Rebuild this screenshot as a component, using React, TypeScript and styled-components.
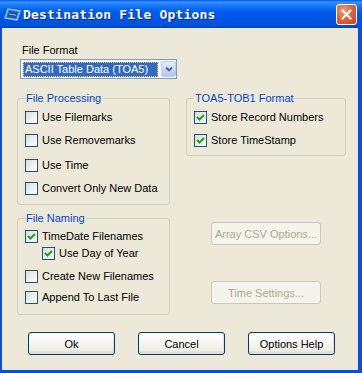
import React from 'react'
import styled, { createGlobalStyle } from 'styled-components'

const GlobalStyle = createGlobalStyle`
    html, body {
        margin: 0;
        padding: 0;
        background: #ECE9D8;
    }
    * {
        box-sizing: border-box;
    }
`;

const CheckMark = () => (
    <svg width="9" height="9" viewBox="0 0 9 9">
        <polyline points="1,4 3.5,6.5 8,2" fill="none" stroke="#21A121" strokeWidth="2.2" />
    </svg>
)

const AppIcon = () => (
    <svg width="17" height="13" viewBox="0 0 17 13">
        <polygon points="4,1 16,3 13,12 1,10" fill="#2F6FD0" stroke="#A9D8FF" strokeWidth="1.2" />
        <polygon points="5.5,3 13.5,4.4 11.6,10 3.6,8.6" fill="#1D4FA8" />
        <line x1="5" y1="6" x2="12" y2="7.2" stroke="#7FC4FF" strokeWidth="1" />
    </svg>
)

const CloseGlyph = () => (
    <svg width="11" height="11" viewBox="0 0 11 11">
        <path d="M1.5 1.5 L9.5 9.5 M9.5 1.5 L1.5 9.5" stroke="#fff" strokeWidth="2.2" strokeLinecap="square" />
    </svg>
)

const Chevron = () => (
    <svg width="8" height="6" viewBox="0 0 8 6">
        <polyline points="1,1.5 4,4.5 7,1.5" fill="none" stroke="#4D6185" strokeWidth="1.8" />
    </svg>
)

interface CheckProps {
    label: string
    checked?: boolean
    top: number
    indent?: number
}

const Check: React.FC<CheckProps> = ({ label, checked, top, indent }) => (
    <CheckRow $top={top} $indent={indent || 0}>
        <CheckBox>{checked && <CheckMark />}</CheckBox>
        <CheckText>{label}</CheckText>
    </CheckRow>
)

const App: React.FC = () => {
    return (
        <Window>
            <GlobalStyle />
            <TitleBar>
                <AppIcon />
                <TitleText>Destination File Options</TitleText>
                <CloseButton><CloseGlyph /></CloseButton>
            </TitleBar>
            <Client>
                <FieldLabel>File Format</FieldLabel>
                <Combo>
                    <ComboValue>ASCII Table Data (TOA5)</ComboValue>
                    <ComboButton><Chevron /></ComboButton>
                </Combo>
                <Columns>
                    <Column $width={153}>
                        <Group $bottom={9}>
                            <GroupTitle>File Processing</GroupTitle>
                            <Check label="Use Filemarks" top={6} />
                            <Check label="Use Removemarks" top={10} />
                            <Check label="Use Time" top={12} />
                            <Check label="Convert Only New Data" top={10} />
                        </Group>
                        <Group $bottom={10} $gap={7}>
                            <GroupTitle>File Naming</GroupTitle>
                            <Check label="TimeDate Filenames" checked top={5} />
                            <Check label="Use Day of Year" checked top={4} indent={17} />
                            <Check label="Create New Filenames" top={10} />
                            <Check label="Append To Last File" top={8} />
                        </Group>
                    </Column>
                    <Column $width={160}>
                        <Group $bottom={8}>
                            <GroupTitle>TOA5-TOB1 Format</GroupTitle>
                            <Check label="Store Record Numbers" checked top={6} />
                            <Check label="Store TimeStamp" checked top={10} />
                        </Group>
                        <SideButton $top={66} disabled>Array CSV Options...</SideButton>
                        <SideButton $top={36} disabled>Time Settings...</SideButton>
                    </Column>
                </Columns>
                <ButtonRow>
                    <PushButton>Ok</PushButton>
                    <PushButton>Cancel</PushButton>
                    <PushButton>Options Help</PushButton>
                </ButtonRow>
            </Client>
        </Window>
    )
}

const Window = styled.div`
    width: 362px;
    height: 373px;
    display: flex;
    flex-direction: column;
    font-family: "Liberation Sans", Arial, sans-serif;
    font-size: 11px;
    color: #000;
`;

const TitleBar = styled.div`
    height: 28px;
    flex: none;
    display: flex;
    align-items: center;
    padding: 0 4px 0 4px;
    background: linear-gradient(
        #0058EE 0%,
        #3A93FF 8%,
        #1C7FFF 16%,
        #0A6AF5 30%,
        #0058E8 50%,
        #0054E3 75%,
        #0052E0 90%,
        #0043CF 100%
    );
`;

const TitleText = styled.div`
    flex: 1;
    margin-left: 2px;
    font-family: "DejaVu Sans Mono", "Liberation Mono", monospace;
    font-weight: bold;
    font-size: 13px;
    letter-spacing: 0.2px;
    color: #fff;
    text-shadow: 1px 1px 0 #0A2A8C;
`;

const CloseButton = styled.div`
    width: 21px;
    height: 21px;
    margin-right: 1px;
    border: 1px solid #fff;
    border-radius: 3px;
    display: flex;
    align-items: center;
    justify-content: center;
    background: radial-gradient(circle at 35% 30%, #F0A07E 0%, #E2643C 45%, #C8421C 100%);
`;

const Client = styled.div`
    flex: 1;
    background: #ECE9D8;
    border-left: 2px solid #0A4FDC;
    border-right: 4px solid #0A4FDC;
    border-bottom: 3px solid #0A4FDC;
    padding: 16px 0 0 15px;
    display: flex;
    flex-direction: column;
    align-items: flex-start;
`;

const FieldLabel = styled.div`
    margin-left: 5px;
    line-height: 13px;
`;

const Combo = styled.div`
    margin: 2px 0 0 3px;
    width: 157px;
    height: 20px;
    border: 1px solid #7F9DB9;
    background: #fff;
    display: flex;
    align-items: center;
    gap: 3px;
    padding: 0 0 0 2px;
`;

const ComboValue = styled.div`
    width: 135px;
    height: 15px;
    margin-top: 1px;
    background: #316AC5;
    color: #fff;
    line-height: 13px;
    padding-left: 1px;
    border: 1px dotted #E8D07A;
    white-space: nowrap;
    overflow: hidden;
`;

const ComboButton = styled.div`
    width: 15px;
    height: 16px;
    border: 1px solid #BACCF5;
    border-radius: 2px;
    background: linear-gradient(#E4ECFD, #C4D5FB 60%, #B2C7F6);
    display: flex;
    align-items: center;
    justify-content: center;
`;

const Columns = styled.div`
    display: flex;
    gap: 16px;
    margin-top: 13px;
`;

const Column = styled.div<{ $width: number }>`
    width: ${p => p.$width}px;
    display: flex;
    flex-direction: column;
    align-items: flex-start;
`;

const Group = styled.fieldset<{ $bottom: number; $gap?: number }>`
    width: 100%;
    margin: ${p => p.$gap || 0}px 0 0 0;
    padding: 0 4px ${p => p.$bottom}px 7px;
    border: 1px solid #D0D0BF;
    border-radius: 3px;
    min-width: 0;
`;

const GroupTitle = styled.legend`
    padding: 0 1px;
    margin: 0;
    line-height: 13px;
    color: #0046D5;
`;

const CheckRow = styled.label<{ $top: number; $indent: number }>`
    display: flex;
    align-items: center;
    gap: 4px;
    height: 13px;
    margin-top: ${p => p.$top}px;
    margin-left: ${p => p.$indent}px;
    white-space: nowrap;
`;

const CheckBox = styled.span`
    width: 13px;
    height: 13px;
    flex: none;
    border: 1px solid #1C5180;
    background: linear-gradient(135deg, #DCDCD7 0%, #F2F2EE 60%, #FFFFFF 100%);
    display: flex;
    align-items: center;
    justify-content: center;
`;

const CheckText = styled.span`
    line-height: 13px;
`;

const SideButton = styled.button<{ $top: number }>`
    margin: ${p => p.$top}px 0 0 25px;
    width: 110px;
    height: 23px;
    padding: 0;
    font-family: "Liberation Sans", Arial, sans-serif;
    font-size: 11px;
    color: #ACA899;
    background: #F5F4EA;
    border: 1px solid #CAC8BB;
    border-radius: 3px;
`;

const ButtonRow = styled.div`
    display: flex;
    gap: 23px;
    margin: 17px 0 0 11px;
`;

const PushButton = styled.button`
    width: 87px;
    height: 23px;
    padding: 0;
    font-family: "Liberation Sans", Arial, sans-serif;
    font-size: 11px;
    color: #000;
    border: 1px solid #003C74;
    border-radius: 3px;
    background: linear-gradient(#FFFFFF 0%, #F6F5F0 50%, #ECEBE4 85%, #D8D2C6 100%);
    box-shadow: inset -1px -1px 0 #E3E1D6;
`;

export default App
